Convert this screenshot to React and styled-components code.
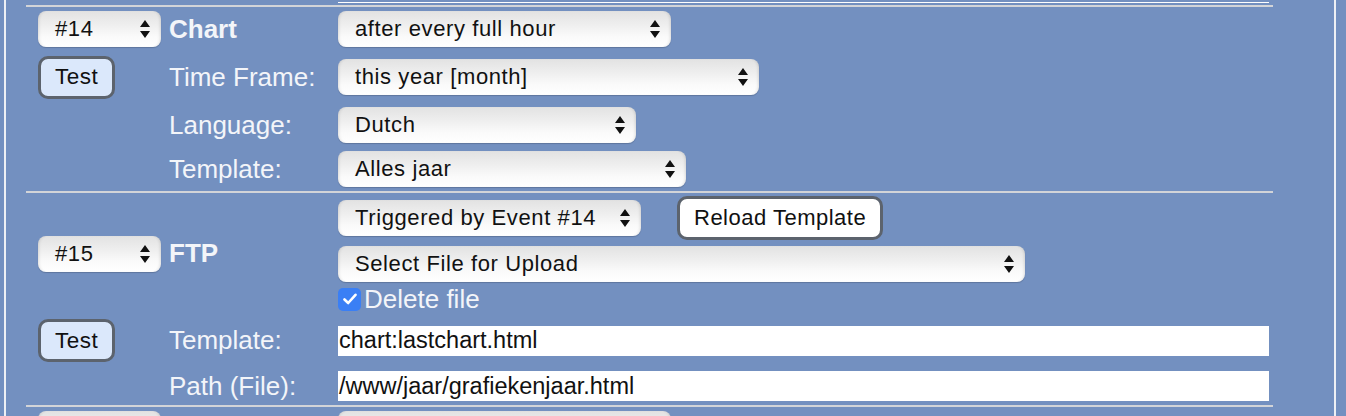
import React from "react";
import styled, { createGlobalStyle } from "styled-components";

const GlobalStyle = createGlobalStyle`
  html, body {
    margin: 0;
    padding: 0;
    overflow: hidden;
    background: #7390c0;
    font-family: "Liberation Sans", Arial, sans-serif;
  }
`;

const Frame = styled.div`
  box-sizing: border-box;
  width: 1332px;
  min-height: 100vh;
  margin-left: 4px;
  padding-left: 20px;
  border-left: 2px solid #eef0f4;
  border-right: 2px solid #eef0f4;
`;

const Section = styled.div`
  display: grid;
  width: 1247px;
  grid-template-columns: 143px 169px 1fr;
  grid-template-rows: ${props => props.$rows};
  align-items: center;
  ${props => props.$sep && 'border-top: 2px solid #d2d4d8;'}
`;

const Cell = styled.div`
  grid-column: ${props => props.$col};
  ${props => props.$rowSpan && `grid-row: ${props.$rowSpan};`}
  padding-left: ${props => (props.$col === 1 ? 12 : 0)}px;
  display: flex;
  align-items: center;
  gap: ${props => props.$gap || 0}px;
`;

const Label = styled.span`
  font-size: 26px;
  color: #f3f5f9;
  font-weight: ${props => (props.$bold ? 700 : 400)};
`;

const SelectBox = styled.div`
  box-sizing: border-box;
  width: ${props => props.$w}px;
  height: 36px;
  display: flex;
  align-items: center;
  justify-content: space-between;
  padding: 0 11px 0 17px;
  border-radius: 8px;
  background: linear-gradient(#e2e2e2, #efefef 40%, #fafafa 70%, #ffffff);
  box-shadow: inset 3px 0 3px -2px rgba(0, 0, 0, 0.12),
    inset -3px 0 3px -2px rgba(0, 0, 0, 0.12), 0 1px 1px rgba(0, 0, 0, 0.18);
  font-size: 22px;
  letter-spacing: 0.6px;
  color: #111;
  white-space: nowrap;
`;

const Button = styled.div`
  box-sizing: border-box;
  height: ${props => props.$h || 43}px;
  padding: 0 14px;
  display: inline-flex;
  align-items: center;
  border: 3px solid #5c636d;
  border-radius: 10px;
  background: ${props => (props.$light ? '#ffffff' : '#dbe8fb')};
  font-size: ${props => (props.$light ? 22 : 22.5)}px;
  letter-spacing: 0.5px;
  color: #111;
`;

const TextInput = styled.div`
  box-sizing: border-box;
  width: 931px;
  height: 30px;
  padding-left: 1px;
  display: flex;
  align-items: center;
  background: #fff;
  font-size: 23.5px;
  color: #111;
  white-space: nowrap;
`;

const Strip = styled.div`
  width: 931px;
  height: 1px;
  background: #fff;
  align-self: start;
`;

const CheckRow = styled.label`
  display: flex;
  align-items: center;
  gap: 3px;
  font-size: 26px;
  color: #f3f5f9;
`;

const CheckBox = styled.span`
  width: 23px;
  height: 23px;
  border-radius: 5px;
  background: #3a7ff5;
  display: flex;
  align-items: center;
  justify-content: center;
`;

const Arrows = () => (
  <svg width="10" height="18" viewBox="0 0 10 18">
    <path d="M0 7 L5 0 L10 7 Z M0 11 L10 11 L5 18 Z" fill="#111" />
  </svg>
);

const Select = ({ w, children }) => (
  <SelectBox $w={w}>
    <span>{children}</span>
    <Arrows />
  </SelectBox>
);

const App = () => (
  <>
    <GlobalStyle />
    <Frame>
      <Section $rows="5px">
        <Cell $col={3}>
          <Strip />
        </Cell>
      </Section>

      <Section $sep $rows="44px 52px 44px 44px">
        <Cell $col={1}><Select w={123}>#14</Select></Cell>
        <Cell $col={2}><Label $bold>Chart</Label></Cell>
        <Cell $col={3}><Select w={333}>after every full hour</Select></Cell>

        <Cell $col={1}><Button>Test</Button></Cell>
        <Cell $col={2}><Label>Time Frame:</Label></Cell>
        <Cell $col={3}><Select w={421}>this year [month]</Select></Cell>

        <Cell $col={2} $rowSpan="3">
          <Label>Language:</Label>
        </Cell>
        <Cell $col={3}><Select w={298}>Dutch</Select></Cell>

        <Cell $col={2} $rowSpan="4"><Label>Template:</Label></Cell>
        <Cell $col={3}><Select w={348}>Alles jaar</Select></Cell>
      </Section>

      <Section $sep $rows="50px 41px 30px 53px 38px">
        <Cell $col={1} $rowSpan="1 / 4"><Select w={123}>#15</Select></Cell>
        <Cell $col={2} $rowSpan="1 / 4"><Label $bold>FTP</Label></Cell>
        <Cell $col={3} $rowSpan="1" $gap={36}>
          <Select w={303}>Triggered by Event #14</Select>
          <Button $light $h={44}>Reload Template</Button>
        </Cell>
        <Cell $col={3} $rowSpan="2"><Select w={687}>Select File for Upload</Select></Cell>
        <Cell $col={3} $rowSpan="3">
          <CheckRow>
            <CheckBox>
              <svg width="14" height="12" viewBox="0 0 14 12">
                <path d="M1.5 6.5 L5.2 10 L12.5 1.8" fill="none" stroke="#fff" strokeWidth="2.6" strokeLinecap="round" strokeLinejoin="round" />
              </svg>
            </CheckBox>
            Delete file
          </CheckRow>
        </Cell>

        <Cell $col={1} $rowSpan="4"><Button>Test</Button></Cell>
        <Cell $col={2} $rowSpan="4"><Label>Template:</Label></Cell>
        <Cell $col={3} $rowSpan="4"><TextInput>chart:lastchart.html</TextInput></Cell>

        <Cell $col={2} $rowSpan="5"><Label>Path (File):</Label></Cell>
        <Cell $col={3} $rowSpan="5"><TextInput>/www/jaar/grafiekenjaar.html</TextInput></Cell>
      </Section>

      {/* next event, only its top edge is in view */}
      <Section $sep $rows="44px">
        <Cell $col={1}><Select w={123} /></Cell>
        <Cell $col={3}><Select w={333} /></Cell>
      </Section>
    </Frame>
  </>
);

export default App;
